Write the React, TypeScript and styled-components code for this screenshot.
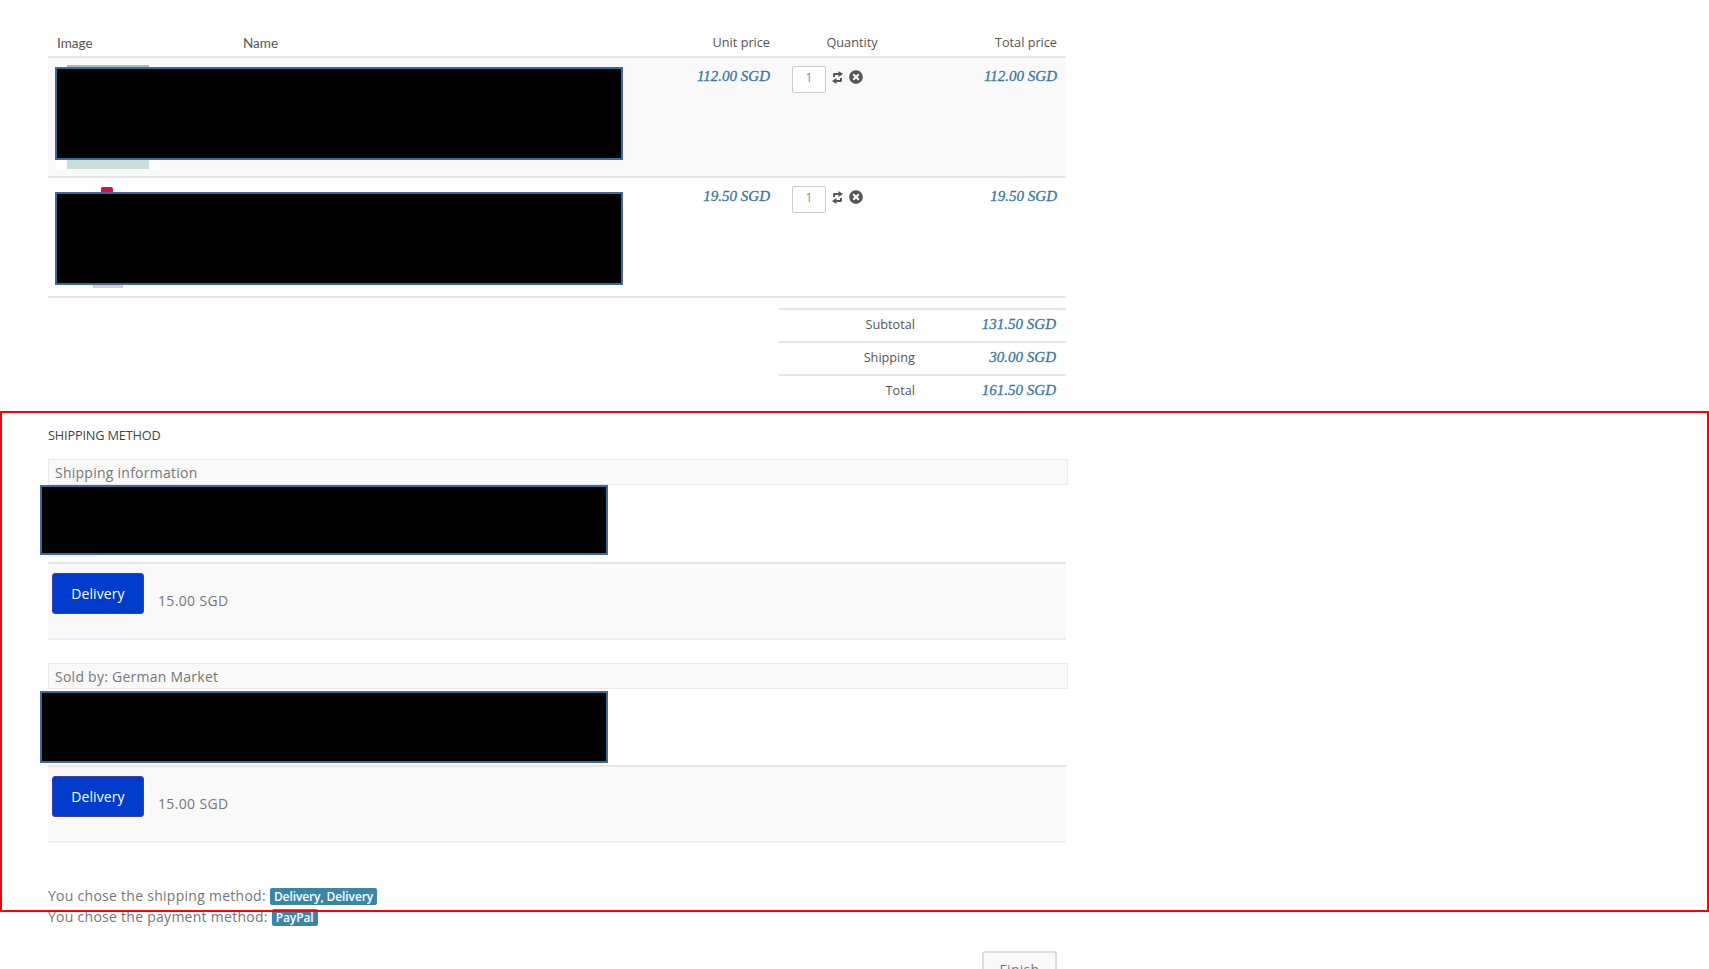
import React from "react";
import styled, { createGlobalStyle } from "styled-components";
import { FaTimesCircle } from "react-icons/fa";

const Global = createGlobalStyle`
  html, body { margin: 0; padding: 0; height: 969px; overflow: hidden; background: #fff; }
  body { font-family: "Open Sans", "Liberation Sans", sans-serif; color: #777; font-size: 14px; }
`;

const Page = styled.div`
  position: relative;
  height: 969px;
  overflow: hidden;
  padding-left: 48px;
  box-sizing: border-box;
`;

const Content = styled.div`
  width: 1019px;
  display: flex;
  flex-direction: column;
`;

const columns = "186px 419px 126px 146px 141px";

const HeadRow = styled.div`
  display: grid;
  grid-template-columns: ${columns};
  height: 58px;
  box-sizing: border-box;
  border-bottom: 2px solid #e6e6e6;
  padding-top: 33px;
  width: 1018px;
  line-height: 18px;
  color: #555;
`;

const HeadCell = styled.div<{ $align?: string }>`
  padding: 0 9px;
  text-align: ${(p) => p.$align || "left"};
  font-size: 12.7px;
`;

const HeadLabel = styled.div`
  padding: 1px 9px 0;
  font-family: Lato, sans-serif;
  font-size: 13.5px;
`;

const ItemRow = styled.div<{ $shaded?: boolean }>`
  position: relative;
  display: grid;
  grid-template-columns: ${columns};
  width: 1018px;
  height: 120px;
  box-sizing: border-box;
  border-bottom: 2px solid #e6e6e6;
  background: ${(p) => (p.$shaded ? "#f9f9f9" : "#fff")};
`;

const Thumb = styled.div`
  margin: 7px 0 0 8px;
  width: 104px;
  height: 105px;
  background: #fff;
  display: flex;
  justify-content: center;
`;

const ThumbFill = styled.div`
  width: 82px;
  height: 104px;
  box-sizing: border-box;
  border-top: 2px solid #a9bdb9;
  background: #c9dedd;
`;

const ThumbBottle = styled.div`
  margin-top: 2px;
  width: 30px;
  height: 101px;
  display: flex;
  flex-direction: column;
  justify-content: space-between;
  align-items: center;
`;

const BottleCap = styled.div`
  width: 12px;
  height: 8px;
  margin-right: 3px;
  border-radius: 2px 2px 0 0;
  background: #d1144f;
`;

const BottleBase = styled.div`
  width: 30px;
  height: 3px;
  background: #e3c9d3;
`;

const Mask = styled.div<{ $top: number; $left: number; $width: number; $height: number }>`
  position: absolute;
  top: ${(p) => p.$top}px;
  left: ${(p) => p.$left}px;
  width: ${(p) => p.$width}px;
  height: ${(p) => p.$height}px;
  box-sizing: border-box;
  background: #000;
  border: 2px solid #3c6a99;
`;

const Price = styled.div`
  padding: 9px 9px 0;
  text-align: right;
  font-family: "Liberation Serif", serif;
  font-style: italic;
  font-size: 15px;
  line-height: 18px;
  color: #37779a;
  -webkit-text-stroke: 0.3px #37779a;
`;

const QtyCell = styled.div`
  display: flex;
  align-items: flex-start;
  align-self: start;
  padding: 8px 0 0 13px;
`;

const QtyInput = styled.div`
  width: 34px;
  height: 27px;
  box-sizing: border-box;
  border: 1px solid #ccc;
  border-radius: 2px;
  background: #fff;
  color: #8a8a8a;
  font-size: 12px;
  line-height: 21px;
  text-align: center;
`;

const IconSlot = styled.span<{ $left: number; $top: number }>`
  display: inline-flex;
  margin: ${(p) => p.$top}px 0 0 ${(p) => p.$left}px;
  color: #555;
  font-size: 14px;
`;

const Summary = styled.div`
  align-self: flex-end;
  width: 287px;
  margin: 10px 1px 0 0;
  display: flex;
  flex-direction: column;
`;

const SummaryRow = styled.div`
  display: grid;
  grid-template-columns: 136px 1fr;
  height: 33px;
  box-sizing: border-box;
  border-top: 2px solid #e6e6e6;
  font-size: 12.7px;
  line-height: 29px;
  color: #555;
`;

const SummaryLabel = styled.div`
  text-align: right;
`;

const SummaryValue = styled.div`
  text-align: right;
  padding-right: 10px;
  font-family: "Liberation Serif", serif;
  font-style: italic;
  font-size: 15px;
  line-height: 29px;
  color: #37779a;
  -webkit-text-stroke: 0.3px #37779a;
`;

const SectionTitle = styled.div`
  margin-top: 20px;
  font-size: 12.8px;
  line-height: 17px;
  padding-bottom: 1px;
  letter-spacing: -0.2px;
  color: #444;
  text-transform: uppercase;
`;

const Group = styled.div<{ $gap: number }>`
  margin-top: ${(p) => p.$gap}px;
  display: flex;
  flex-direction: column;
  width: 1018px;
`;

const GroupBar = styled.div`
  height: 26px;
  box-sizing: border-box;
  border: 1px solid #e9e9e9;
  background: #f9f9f9;
  padding-left: 6px;
  font-size: 14px;
  line-height: 25px;
  color: #777;
  letter-spacing: 0.25px;
  width: 1020px;
`;

const Address = styled.div<{ $height: number }>`
  position: relative;
  height: ${(p) => p.$height}px;
`;

const AddressStub = styled.div`
  position: absolute;
  left: 0;
  top: 60px;
  width: 49px;
  height: 12px;
  box-sizing: border-box;
  border: 1px solid #eee;
`;

const MethodRow = styled.div`
  height: 78px;
  box-sizing: border-box;
  border-top: 2px solid #e6e6e6;
  border-bottom: 2px solid #eee;
  background: #f9f9f9;
  padding: 9px 4px 0;
  display: flex;
  align-items: flex-start;
`;

const MethodButton = styled.button`
  width: 92px;
  height: 41px;
  box-sizing: border-box;
  border: 1px solid #4a3aa0;
  border-radius: 3px;
  background: #003ccb;
  color: #fff;
  font-family: "Open Sans", sans-serif;
  font-size: 14px;
  font-weight: 500;
  letter-spacing: 0.1px;
  padding: 0;
`;

const MethodPrice = styled.span`
  margin: 18px 0 0 14px;
  font-size: 14px;
  line-height: 20px;
  letter-spacing: 0.35px;
  color: #777;
`;

const Choices = styled.div`
  margin-top: 43px;
  display: flex;
  flex-direction: column;
`;

const ChoiceLine = styled.div`
  height: 20.5px;
  line-height: 20px;
  font-size: 14px;
  letter-spacing: 0.27px;
  color: #777;
  white-space: nowrap;
`;

const ChoiceTag = styled.span`
  display: inline-block;
  margin-left: 4px;
  padding: 0 4px;
  height: 17px;
  line-height: 17px;
  font-size: 12px;
  font-weight: 600;
  letter-spacing: -0.1px;
  color: #fff;
  background: #3a86a8;
  border-radius: 2px;
`;

const Footer = styled.div`
  display: flex;
  justify-content: flex-end;
  margin-top: 24px;
  padding-right: 10px;
`;

const FinishButton = styled.button`
  width: 75px;
  height: 36px;
  box-sizing: border-box;
  border: 2px solid #ddd;
  border-radius: 3px;
  background: #f9f9f9;
  color: #777;
  font-family: "Open Sans", sans-serif;
  font-size: 14px;
  letter-spacing: 0.3px;
  padding: 0;
`;

const Highlight = styled.div`
  position: absolute;
  top: 411px;
  left: 0;
  right: 0;
  height: 501px;
  box-sizing: border-box;
  border: 2px solid #f00;
  pointer-events: none;
`;

const SwapIcon = () => (
  <svg width="11" height="13" viewBox="0 0 11 13" fill="currentColor">
    <path d="M1 6V3.5C1 2.7 1.7 2 2.5 2H6.5V0L11 3 6.5 6V4H3v2z" />
    <path d="M10 7v2.5c0 .8-.7 1.5-1.5 1.5H4.5v2L0 10l4.5-3v2H8V7z" />
  </svg>
);

const items = [
  { price: "112.00 SGD", shaded: true },
  { price: "19.50 SGD", shaded: false },
];

const totals = [
  ["Subtotal", "131.50 SGD"],
  ["Shipping", "30.00 SGD"],
  ["Total", "161.50 SGD"],
];

const groups = [
  { title: "Shipping information", gap: 14, stub: true, addressHeight: 77, maskTop: 0, maskHeight: 70 },
  { title: "Sold by: German Market", gap: 23, stub: false, addressHeight: 76, maskTop: 2, maskHeight: 72 },
];

export default function App() {
  return (
    <Page>
      <Global />
      <Content>
        <HeadRow>
          <HeadLabel>Image</HeadLabel>
          <HeadLabel>Name</HeadLabel>
          <HeadCell $align="right">Unit price</HeadCell>
          <HeadCell $align="center">Quantity</HeadCell>
          <HeadCell $align="right">Total price</HeadCell>
        </HeadRow>
        {items.map((item) => (
          <ItemRow key={item.price} $shaded={item.shaded}>
            <Thumb>
              {item.shaded ? (
                <ThumbFill />
              ) : (
                <ThumbBottle>
                  <BottleCap />
                  <BottleBase />
                </ThumbBottle>
              )}
            </Thumb>
            <div />
            <Price>{item.price}</Price>
            <QtyCell>
              <QtyInput>1</QtyInput>
              <IconSlot $left={6} $top={5}>
                <SwapIcon />
              </IconSlot>
              <IconSlot $left={6} $top={4}>
                <FaTimesCircle />
              </IconSlot>
            </QtyCell>
            <Price>{item.price}</Price>
            <Mask $top={item.shaded ? 9 : 14} $left={7} $width={568} $height={93} />
          </ItemRow>
        ))}
        <Summary>
          {totals.map(([label, value]) => (
            <SummaryRow key={label}>
              <SummaryLabel>{label}</SummaryLabel>
              <SummaryValue>{value}</SummaryValue>
            </SummaryRow>
          ))}
        </Summary>
        <SectionTitle>Shipping method</SectionTitle>
        {groups.map((group) => (
          <Group key={group.title} $gap={group.gap}>
            <GroupBar>{group.title}</GroupBar>
            <Address $height={group.addressHeight}>
              {group.stub && <AddressStub />}
              <Mask $top={group.maskTop} $left={-8} $width={568} $height={group.maskHeight} />
            </Address>
            <MethodRow>
              <MethodButton>Delivery</MethodButton>
              <MethodPrice>15.00 SGD</MethodPrice>
            </MethodRow>
          </Group>
        ))}
        <Choices>
          <ChoiceLine>
            You chose the shipping method:<ChoiceTag>Delivery, Delivery</ChoiceTag>
          </ChoiceLine>
          <ChoiceLine>
            You chose the payment method:<ChoiceTag>PayPal</ChoiceTag>
          </ChoiceLine>
        </Choices>
        <Footer>
          <FinishButton>Finish</FinishButton>
        </Footer>
      </Content>
      <Highlight />
    </Page>
  );
}
